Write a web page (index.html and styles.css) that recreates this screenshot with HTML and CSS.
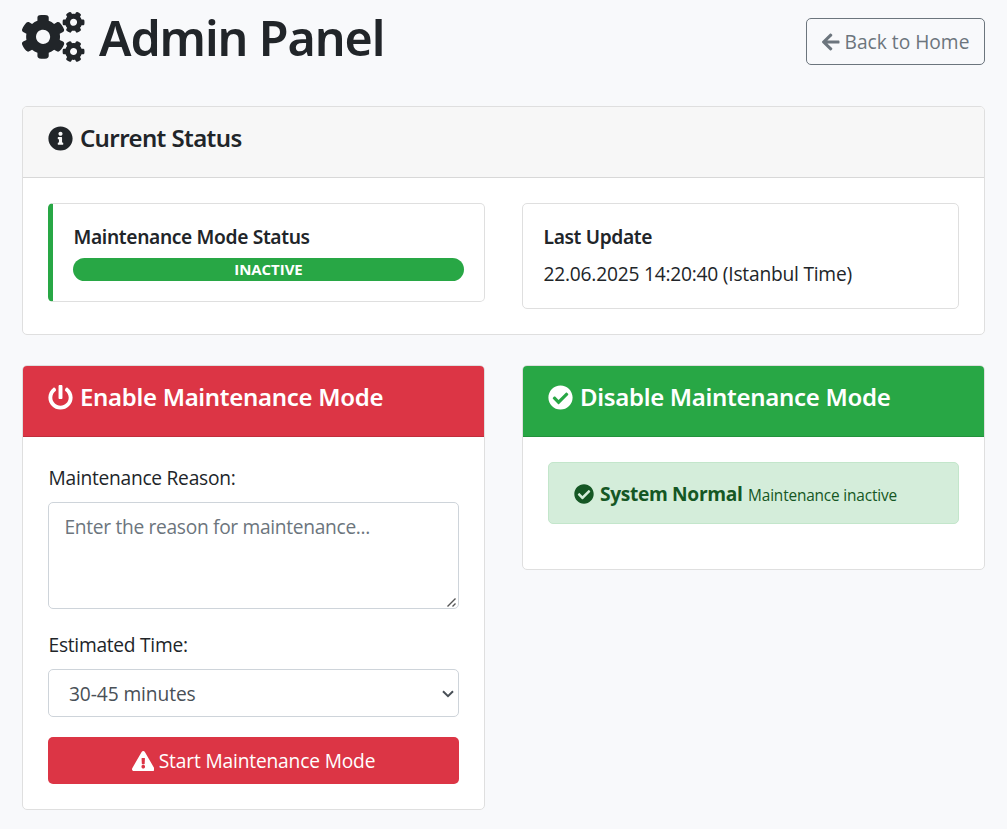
FILE: index.html
```
<!DOCTYPE html>
<html lang="en">
<head>
<meta charset="utf-8">
<title>Admin Panel</title>
<link rel="stylesheet" href="styles.css">
</head>
<body>
<svg class="sprite" aria-hidden="true">
  <symbol id="check-circle" viewBox="0 0 512 512"><path d="M504 256c0 136.967-111.033 248-248 248S8 392.967 8 256 119.033 8 256 8s248 111.033 248 248zM227.314 387.314l184-184c6.248-6.248 6.248-16.379 0-22.627l-22.627-22.627c-6.248-6.249-16.379-6.249-22.628 0L216 308.118l-70.059-70.059c-6.248-6.248-16.379-6.248-22.628 0l-22.627 22.627c-6.248 6.248-6.248 16.379 0 22.627l104 104c6.249 6.249 16.379 6.249 22.628.001z"/></symbol>
</svg>
<header class="page-header">
  <h1 class="page-title">
    <svg class="icon icon-cogs" viewBox="0 0 640 512"><path d="M512.1 191l-8.2 14.3c-3 5.3-9.4 7.5-15.1 5.4-11.8-4.4-22.6-10.7-32.1-18.6-4.6-3.8-5.8-10.5-2.8-15.7l8.2-14.3c-6.9-8-12.3-17.3-15.9-27.4h-16.5c-6 0-11.2-4.3-12.2-10.3-2-12-2.1-24.6 0-37.1 1-6 6.2-10.4 12.2-10.4h16.5c3.6-10.1 9-19.4 15.9-27.4l-8.2-14.3c-3-5.2-1.9-11.9 2.8-15.7 9.5-7.9 20.4-14.2 32.1-18.6 5.7-2.1 12.1.1 15.1 5.4l8.2 14.3c10.5-1.9 21.2-1.9 31.7 0L552 6.3c3-5.3 9.4-7.5 15.1-5.4 11.8 4.4 22.6 10.7 32.1 18.6 4.6 3.8 5.8 10.5 2.8 15.7l-8.2 14.3c6.9 8 12.3 17.3 15.9 27.4h16.5c6 0 11.2 4.3 12.2 10.3 2 12 2.1 24.6 0 37.1-1 6-6.2 10.4-12.2 10.4h-16.5c-3.6 10.1-9 19.4-15.9 27.4l8.2 14.3c3 5.2 1.9 11.9-2.8 15.7-9.5 7.9-20.4 14.2-32.1 18.6-5.7 2.1-12.1-.1-15.1-5.4l-8.2-14.3c-10.4 1.9-21.2 1.9-31.7 0zm-10.5-58.8c38.5 29.6 82.4-14.3 52.8-52.8-38.5-29.7-82.4 14.3-52.8 52.8zM386.3 286.1l33.7 16.8c10.1 5.8 14.5 18.1 10.5 29.1-8.9 24.2-26.4 46.4-42.6 65.8-7.4 8.9-20.2 11.1-30.3 5.3l-29.1-16.8c-16 13.7-34.6 24.6-54.9 31.7v33.6c0 11.6-8.3 21.6-19.7 23.6-24.6 4.2-50.4 4.4-75.9 0-11.5-2-20-11.9-20-23.6V418c-20.3-7.2-38.9-18-54.9-31.7L74 403c-10 5.8-22.9 3.6-30.3-5.3-16.2-19.4-33.3-41.6-42.2-65.7-4-10.9.4-23.2 10.5-29.1l33.3-16.8c-3.9-20.9-3.9-42.4 0-63.4L12 205.8c-10.1-5.8-14.6-18.1-10.5-29 8.9-24.2 26-46.4 42.2-65.8 7.4-8.9 20.2-11.1 30.3-5.3l29.1 16.8c16-13.7 34.6-24.6 54.9-31.7V57.1c0-11.5 8.2-21.5 19.6-23.5 24.6-4.2 50.5-4.4 76-.1 11.5 2 20 11.9 20 23.6v33.6c20.3 7.2 38.9 18 54.9 31.7l29.1-16.8c10-5.8 22.9-3.6 30.3 5.3 16.2 19.4 33.2 41.6 42.1 65.8 4 10.9.1 23.2-10 29.1l-33.7 16.8c3.9 21 3.9 42.5 0 63.5zm-117.6 21.1c59.2-77-28.7-164.9-105.7-105.7-59.2 77 28.7 164.9 105.7 105.7zm243.4 182.7l-8.2 14.3c-3 5.3-9.4 7.5-15.1 5.4-11.8-4.4-22.6-10.7-32.1-18.6-4.6-3.8-5.8-10.5-2.8-15.7l8.2-14.3c-6.9-8-12.3-17.3-15.9-27.4h-16.5c-6 0-11.2-4.3-12.2-10.3-2-12-2.1-24.6 0-37.1 1-6 6.2-10.4 12.2-10.4h16.5c3.6-10.1 9-19.4 15.9-27.4l-8.2-14.3c-3-5.2-1.9-11.9 2.8-15.7 9.5-7.9 20.4-14.2 32.1-18.6 5.7-2.1 12.1.1 15.1 5.4l8.2 14.3c10.5-1.9 21.2-1.9 31.7 0l8.2-14.3c3-5.3 9.4-7.5 15.1-5.4 11.8 4.4 22.6 10.7 32.1 18.6 4.6 3.8 5.8 10.5 2.8 15.7l-8.2 14.3c6.9 8 12.3 17.3 15.9 27.4h16.5c6 0 11.2 4.3 12.2 10.3 2 12 2.1 24.6 0 37.1-1 6-6.2 10.4-12.2 10.4h-16.5c-3.6 10.1-9 19.4-15.9 27.4l8.2 14.3c3 5.2 1.9 11.9-2.8 15.7-9.5 7.9-20.4 14.2-32.1 18.6-5.7 2.1-12.1-.1-15.1-5.4l-8.2-14.3c-10.4 1.9-21.2 1.9-31.7 0zM501.6 431c38.5 29.6 82.4-14.3 52.8-52.8-38.5-29.6-82.4 14.3-52.8 52.8z"/></svg>
    <span>Admin Panel</span>
  </h1>
  <a class="btn-back" href="#">
    <svg class="icon icon-arrow" viewBox="0 0 448 512"><path d="M257.5 445.1l-22.2 22.2c-9.4 9.4-24.6 9.4-33.9 0L7 273c-9.4-9.4-9.4-24.6 0-33.9L201.4 44.7c9.4-9.4 24.6-9.4 33.9 0l22.2 22.2c9.5 9.5 9.3 25-.4 34.3L136.6 216H424c13.3 0 24 10.7 24 24v32c0 13.3-10.7 24-24 24H136.6l120.5 114.8c9.8 9.3 10 24.8.4 34.3z"/></svg>
    <span>Back to Home</span>
  </a>
</header>

<section class="card">
  <h2 class="card-header title-status">
    <svg class="icon icon-title" viewBox="0 0 512 512"><path d="M256 8C119.043 8 8 119.083 8 256c0 136.997 111.043 248 248 248s248-111.003 248-248C504 119.083 392.957 8 256 8zm0 110c23.196 0 42 18.804 42 42s-18.804 42-42 42-42-18.804-42-42 18.804-42 42-42zm56 254c0 6.627-5.373 12-12 12h-88c-6.627 0-12-5.373-12-12v-24c0-6.627 5.373-12 12-12h12v-64h-12c-6.627 0-12-5.373-12-12v-24c0-6.627 5.373-12 12-12h64c6.627 0 12 5.373 12 12v100h12c6.627 0 12 5.373 12 12v24z"/></svg>
    <span>Current Status</span>
  </h2>
  <div class="card-body columns">
    <div class="status-box status-active">
      <h3 class="status-title">Maintenance Mode Status</h3>
      <div class="badge">INACTIVE</div>
    </div>
    <div class="status-box">
      <h3 class="status-title">Last Update</h3>
      <p class="status-date">22.06.2025 14:20:40 (Istanbul Time)</p>
    </div>
  </div>
</section>

<div class="columns actions">
  <section class="card">
    <h2 class="card-header danger">
      <svg class="icon icon-title" viewBox="0 0 512 512"><path d="M400 54.1c63 45 104 118.6 104 201.9 0 136.8-110.8 247.7-247.5 248C120 504.3 8.2 393 8 256.4 7.9 173.1 48.9 99.3 111.8 54.2c11.7-8.3 28-4.8 35 7.7L162.6 90c5.9 10.5 3.1 23.8-6.6 31-41.5 30.8-68 79.6-68 134.9-.1 92.3 74.5 168.1 168 168.1 91.6 0 168.6-74.2 168-169.1-.3-51.8-24.7-101.8-68.1-134-9.7-7.2-12.4-20.5-6.5-30.9l15.8-28.1c7-12.4 23.2-16.1 34.8-7.8zM296 264V24c0-13.3-10.7-24-24-24h-32c-13.3 0-24 10.7-24 24v240c0 13.3 10.7 24 24 24h32c13.3 0 24-10.7 24-24z"/></svg>
      <span>Enable Maintenance Mode</span>
    </h2>
    <form class="card-body">
      <label class="label" for="reason">Maintenance Reason:</label>
      <textarea class="field reason" id="reason" placeholder="Enter the reason for maintenance..."></textarea>
      <label class="label" for="time">Estimated Time:</label>
      <select class="field time" id="time"><option>30-45 minutes</option></select>
      <button class="btn-start" type="button">
        <svg class="icon icon-warning" viewBox="0 0 576 512"><path d="M569.517 440.013C587.975 472.007 564.806 512 527.94 512H48.054c-36.937 0-59.999-40.055-41.577-71.987L246.423 23.985c18.467-32.009 64.72-31.951 83.154 0l239.94 416.028zM288 354c-25.405 0-46 20.595-46 46s20.595 46 46 46 46-20.595 46-46-20.595-46-46-46zm-43.673-165.346l7.418 136c.347 6.364 5.609 11.346 11.982 11.346h48.546c6.373 0 11.635-4.982 11.982-11.346l7.418-136c.375-6.874-5.098-12.654-11.982-12.654h-63.383c-6.884 0-12.356 5.78-11.981 12.654z"/></svg>
        <span>Start Maintenance Mode</span>
      </button>
    </form>
  </section>
  <section class="card">
    <h2 class="card-header success">
      <svg class="icon icon-title"><use href="#check-circle"/></svg>
      <span>Disable Maintenance Mode</span>
    </h2>
    <div class="card-body">
      <div class="alert">
        <svg class="icon icon-alert"><use href="#check-circle"/></svg>
        <strong>System Normal</strong>
        <small>Maintenance inactive</small>
      </div>
    </div>
  </section>
</div>
</body>
</html>
```

FILE: styles.css
```
* { box-sizing: border-box; }

body {
  margin: 0;
  padding: 0 22px;
  background: #f8f9fb;
  color: #212529;
  font: 400 19.2px/30px "Open Sans", "Noto Sans", sans-serif;
}

h1, h2, h3, p { margin: 0; }

.sprite { display: none; }
.icon { flex: none; fill: currentColor; }

.page-header {
  display: flex;
  justify-content: space-between;
  align-items: flex-start;
  margin-bottom: 32px;
}
.page-title {
  display: flex;
  align-items: center;
  gap: 14.5px;
  font: 600 48.4px/74px "Noto Sans", sans-serif;
  letter-spacing: -1.1px;
}
.icon-cogs { width: 62.5px; height: 50px; }

.btn-back {
  display: flex;
  align-items: center;
  gap: 5px;
  width: 179px;
  height: 47px;
  margin-top: 18px;
  padding-left: 15px;
  border: 1px solid #6c757d;
  border-radius: 5px;
  color: #6c757d;
  text-decoration: none;
  white-space: nowrap;
}
.icon-arrow { width: 17.5px; height: 20px; }

.card {
  background: #fff;
  border: 1px solid #dfdfdf;
  border-radius: 5px;
}
.card-header {
  display: flex;
  align-items: center;
  gap: 6.5px;
  height: 71px;
  padding: 16px 25px 24px 25.4px;
  border-bottom: 1px solid rgba(0, 0, 0, .125);
  border-radius: 4px 4px 0 0;
  background: #f7f7f7;
  font: 600 24px/30px "Noto Sans", sans-serif;
  letter-spacing: -0.3px;
}
.title-status { letter-spacing: -0.6px; }
.danger { background: #dc3545; color: #fff; }
.success { background: #28a745; color: #fff; }
.icon-title { width: 25px; height: 25px; }
.card-body { padding: 25px; }

.columns {
  display: grid;
  grid-template-columns: 1fr 1fr;
  gap: 37px;
  align-items: start;
}
.actions { margin-top: 30px; }

.status-box {
  padding: 20px;
  border: 1px solid #dfdfdf;
  border-radius: 5px;
}
.status-active { border-left: 5px solid #28a745; }
.status-title {
  margin-bottom: 9px;
  padding-left: .5px;
  font: 600 19.2px/25px "Noto Sans", sans-serif;
  letter-spacing: -0.35px;
}
.badge {
  height: 23px;
  border-radius: 12px;
  background: #28a745;
  color: #fff;
  font-size: 15px;
  font-weight: 700;
  line-height: 23px;
  letter-spacing: -0.05px;
  text-align: center;
}
.status-date {
  margin-bottom: -2px;
  padding-left: .5px;
  line-height: 32px;
  letter-spacing: -0.22px;
}

.label {
  display: block;
  margin-bottom: 8px;
  padding-left: .5px;
  line-height: 32px;
  letter-spacing: -0.27px;
}
.field {
  display: block;
  width: 100%;
  margin-bottom: 20px;
  border: 1px solid #ced4da;
  border-radius: 5px;
  background: #fff;
  color: #495057;
  font: inherit;
}
.reason {
  height: 107px;
  padding: 9px 15.5px;
  letter-spacing: -0.32px;
  resize: vertical;
}
.reason::placeholder { color: #6c757d; }
.reason::-webkit-resizer {
  background: url("data:image/svg+xml,%3Csvg xmlns='http://www.w3.org/2000/svg' width='15' height='15'%3E%3Cpath d='M4.5 13.5l8-8M9.5 13.5l3-3' stroke='%23555' stroke-width='1.4'/%3E%3C/svg%3E") no-repeat right bottom;
}
.time {
  height: 48px;
  padding: 9px 20px 7px;
  letter-spacing: -0.1px;
  appearance: none;
  background: #fff url("data:image/svg+xml,%3Csvg xmlns='http://www.w3.org/2000/svg' width='12' height='8'%3E%3Cpath d='M1 1.2l5 5 5-5' fill='none' stroke='%23495057' stroke-width='2'/%3E%3C/svg%3E") no-repeat right 4px top 20px;
}

.btn-start {
  display: flex;
  align-items: center;
  justify-content: center;
  gap: 4.5px;
  width: 100%;
  height: 47px;
  border: 0;
  border-radius: 5px;
  background: #dc3545;
  color: #fff;
  font: inherit;
  letter-spacing: -0.17px;
}
.icon-warning { width: 22.5px; height: 20px; }

.alert {
  display: flex;
  align-items: baseline;
  gap: 5.5px;
  height: 62px;
  margin-bottom: 20px;
  padding: 16px 25px 14px 25.4px;
  border: 1px solid #c3e6cb;
  border-radius: 5px;
  background: #d4edda;
  color: #155724;
}
.alert strong { letter-spacing: -0.33px; }
.alert small { font-size: 15.4px; letter-spacing: -0.17px; }
.icon-alert { width: 20px; height: 20px; align-self: center; }
```
